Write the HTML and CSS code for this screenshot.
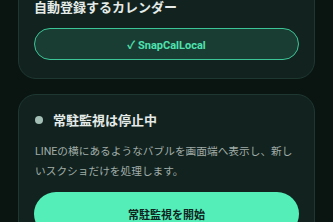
FILE: index.html
```html
<!DOCTYPE html>
<html lang="ja">
<head>
  <meta charset="UTF-8">
  <meta name="viewport" content="width=device-width, initial-scale=1.0">
  <title>SnapCal</title>
  <link rel="stylesheet" href="styles.css">
</head>
<body>
  <div class="screen">
    <div class="card">
      <h2 class="card-heading">自動登録するカレンダー</h2>
      <button class="calendar-pill">✓ SnapCalLocal</button>
    </div>

    <div class="card">
      <div class="status">
        <span class="status-dot"></span>
        <h2 class="status-title">常駐監視は停止中</h2>
      </div>
      <p class="status-desc">LINEの横にあるようなバブルを画面端へ表示し、新しいスクショだけを処理します。</p>
      <button class="start-button">常駐監視を開始</button>
    </div>
  </div>
</body>
</html>
```

FILE: styles.css
```css
body {
  margin: 0;
  padding: 0 18px;
  background-color: #0a1512;
  color: #e4ebe8;
  font-family: Roboto, "Noto Sans CJK JP", sans-serif;
  overflow: hidden;
}

.screen {
  margin-top: -21px;
  display: flex;
  flex-direction: column;
  gap: 15px;
}

.card {
  background: #12231f;
  border: 1px solid #1e3831;
  border-radius: 18px;
  padding: 18px 15px;
}

.card-heading {
  margin: 0 0 10px;
  font-size: 13px;
  line-height: 20px;
  font-weight: bold;
  color: #e4ebe8;
}

.calendar-pill {
  display: block;
  width: 100%;
  height: 32px;
  border: 1.5px solid #3cc596;
  border-radius: 16px;
  background-color: #1a3d33;
  color: #4fe2b0;
  font-family: inherit;
  font-size: 11px;
  font-weight: bold;
  cursor: pointer;
}

.card + .card {
  padding-top: 16px;
}

.status {
  display: flex;
  align-items: center;
  gap: 10px;
}

.status-dot {
  width: 8px;
  height: 8px;
  margin-left: 1px;
  margin-top: -3px;
  border-radius: 50%;
  background-color: #a4bfb5;
}

.status-title {
  margin: 0;
  font-size: 13px;
  line-height: 20px;
  font-weight: bold;
  color: #e4ebe8;
}

.status-desc {
  margin: 11px 0 10px 1px;
  font-size: 10.7px;
  line-height: 20px;
  color: #a0aca8;
}

.start-button {
  display: block;
  width: 100%;
  height: 44px;
  border: none;
  border-radius: 22px;
  background-color: #54efb9;
  color: #0f241d;
  font-family: inherit;
  font-size: 11px;
  font-weight: bold;
  cursor: pointer;
}
```
